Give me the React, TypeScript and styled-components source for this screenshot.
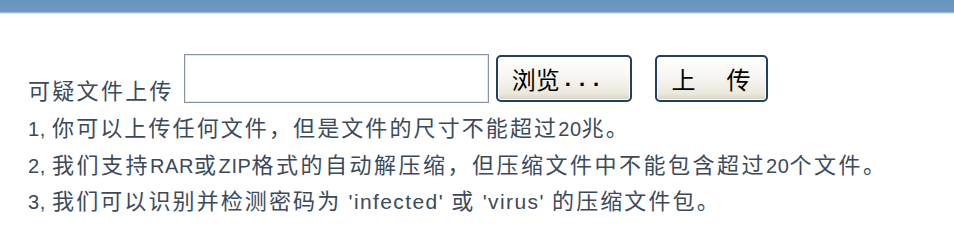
import React from "react";
import styled, { createGlobalStyle } from "styled-components";

const Global = createGlobalStyle`
  html, body { margin: 0; padding: 0; background: #ffffff; }
  body { font-family: "Noto Sans CJK SC", "Liberation Sans", sans-serif; }
`;

const Page = styled.div`
  width: 954px;
  height: 244px;
  background: #ffffff;
  overflow: hidden;
`;

const TopBar = styled.div`
  height: 12px;
  background: linear-gradient(#6a94c0, #6f98c2);
  border-bottom: 1px solid #9fb9d6;
  box-shadow: 0 1px 1px #dde7f2;
`;

const Content = styled.div`
  padding: 41px 0 0 28px;
  color: #3b4a5b;
`;

const UploadRow = styled.div`
  display: flex;
  align-items: flex-start;
  height: 49px;
`;

const Label = styled.span`
  align-self: flex-end;
  margin-bottom: 2px;
  font-family: "Noto Sans CJK SC", sans-serif;
  font-size: 22px;
  line-height: 24px;
  letter-spacing: 2.3px;
  color: #3b4a5b;
  margin-right: 10px;
`;

const FileInput = styled.div`
  box-sizing: border-box;
  width: 305px;
  height: 49px;
  border: 1px solid #8392a4;
  box-shadow: inset 0 0 0 1px #e4e8ee;
  background: #ffffff;
`;

const Button = styled.button<{ $width: number; $gap: number; $align: "start" | "center" }>`
  box-sizing: border-box;
  margin: 1px 0 0 ${(p) => p.$gap}px;
  width: ${(p) => p.$width}px;
  height: 47px;
  padding: ${(p) => (p.$align === "start" ? "0 0 0 14px" : "0 0 0 3px")};
  display: flex;
  align-items: center;
  justify-content: ${(p) => (p.$align === "start" ? "flex-start" : "center")};
  border: 2px solid #213f5f;
  border-radius: 5px;
  background: linear-gradient(#ffffff 0%, #f7f6f1 45%, #ebe8dc 85%, #d6d2c2 100%);
  box-shadow: inset 0 0 0 1px #ffffff;
  font-family: "Noto Sans CJK SC", sans-serif;
  font-size: 24px;
  line-height: 1;
  color: #000000;
  letter-spacing: ${(p) => (p.$align === "start" ? "0px" : "3.5px")};
  cursor: pointer;
`;

const Dots = styled.span`
  font-family: "Liberation Sans", Arial, sans-serif;
  font-size: 22px;
  font-weight: bold;
  letter-spacing: 8px;
  margin-left: 5px;
`;

const Notes = styled.div`
  margin-top: 5px;
  display: flex;
  flex-direction: column;
`;

const Note = styled.p<{ $spacing?: number }>`
  margin: 0;
  font-family: "Noto Sans CJK SC", sans-serif;
  font-size: 22px;
  line-height: 36.5px;
  height: 36.5px;
  letter-spacing: ${(p) => p.$spacing ?? 2.1}px;
  color: #3b4a5b;
  white-space: nowrap;
`;

const Lat = styled.span<{ $wide?: boolean }>`
  font-family: "Liberation Sans", Arial, sans-serif;
  font-size: ${(p) => (p.$wide ? "21px" : "20px")};
  letter-spacing: ${(p) => (p.$wide ? "1.4px" : "0.6px")};
`;

export default function App() {
  return (
    <Page>
      <Global />
      <TopBar />
      <Content>
        <UploadRow>
          <Label>可疑文件上传</Label>
          <FileInput />
          <Button $width={136} $gap={7} $align="start">
            浏览<Dots>...</Dots>
          </Button>
          <Button $width={113} $gap={23} $align="center">上　传</Button>
        </UploadRow>
        <Notes>
          <Note>
            <Lat>1, </Lat>你可以上传任何文件，但是文件的尺寸不能超过<Lat>20</Lat>兆。
          </Note>
          <Note $spacing={2.5}>
            <Lat>2, </Lat>我们支持<Lat>RAR</Lat>或<Lat>ZIP</Lat>格式的自动解压缩，但压缩文件中不能包含超过<Lat>20</Lat>个文件。
          </Note>
          <Note>
            <Lat>3, </Lat>我们可以识别并检测密码为<Lat $wide> 'infected' </Lat>或<Lat $wide> 'virus' </Lat>的压缩文件包。
          </Note>
        </Notes>
      </Content>
    </Page>
  );
}
